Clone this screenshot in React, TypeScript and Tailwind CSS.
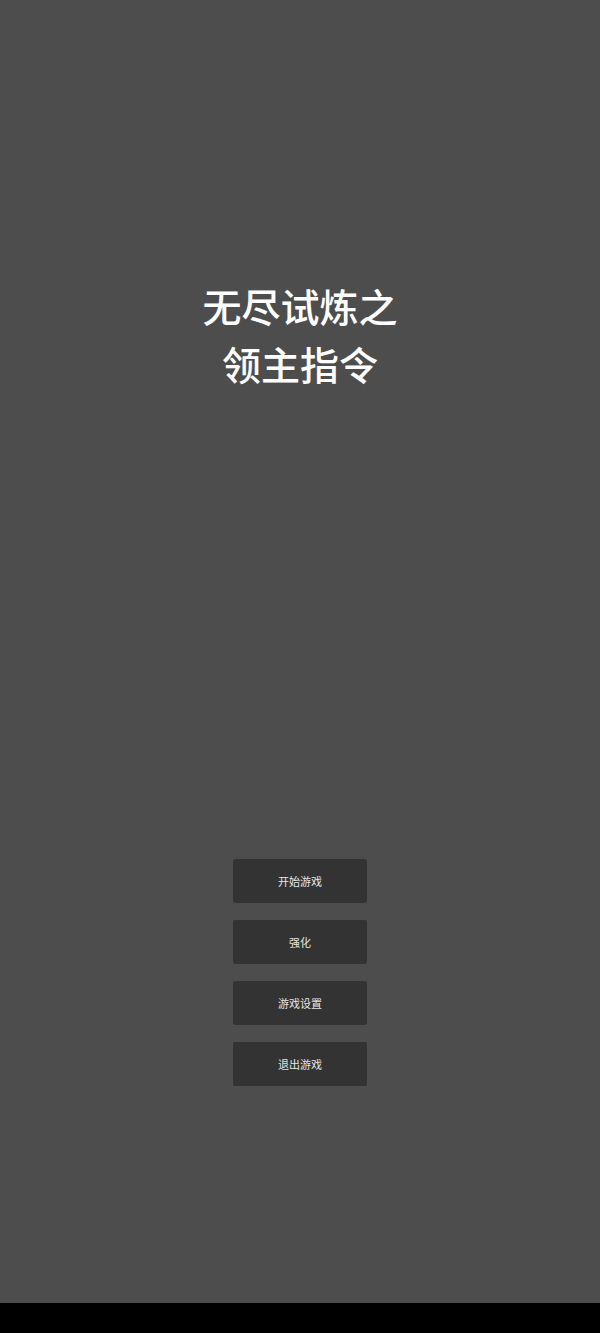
import React from "react";

export default function App() {
  const buttons = ["开始游戏", "强化", "游戏设置", "退出游戏"];
  return (
    <div
      className="w-[600px] h-[1333px] flex flex-col bg-black"
      style={{ fontFamily: '"Noto Sans CJK SC", "Noto Sans", sans-serif' }}
    >
      <div className="h-[1303px] bg-[#4d4d4d] flex flex-col items-center pt-[276px]">
        <h1 className="text-[39px] leading-[58px] font-medium text-white text-center">
          无尽试炼之
          <br />
          领主指令
        </h1>
        <div className="mt-[467px] flex flex-col gap-[17px]">
          {buttons.map((b) => (
            <button
              key={b}
              className="w-[134px] h-[44px] bg-[#333333] text-[#e6e6e6] text-[11px] flex items-center justify-center rounded-[2px]"
            >
              {b}
            </button>
          ))}
        </div>
      </div>
    </div>
  );
}
